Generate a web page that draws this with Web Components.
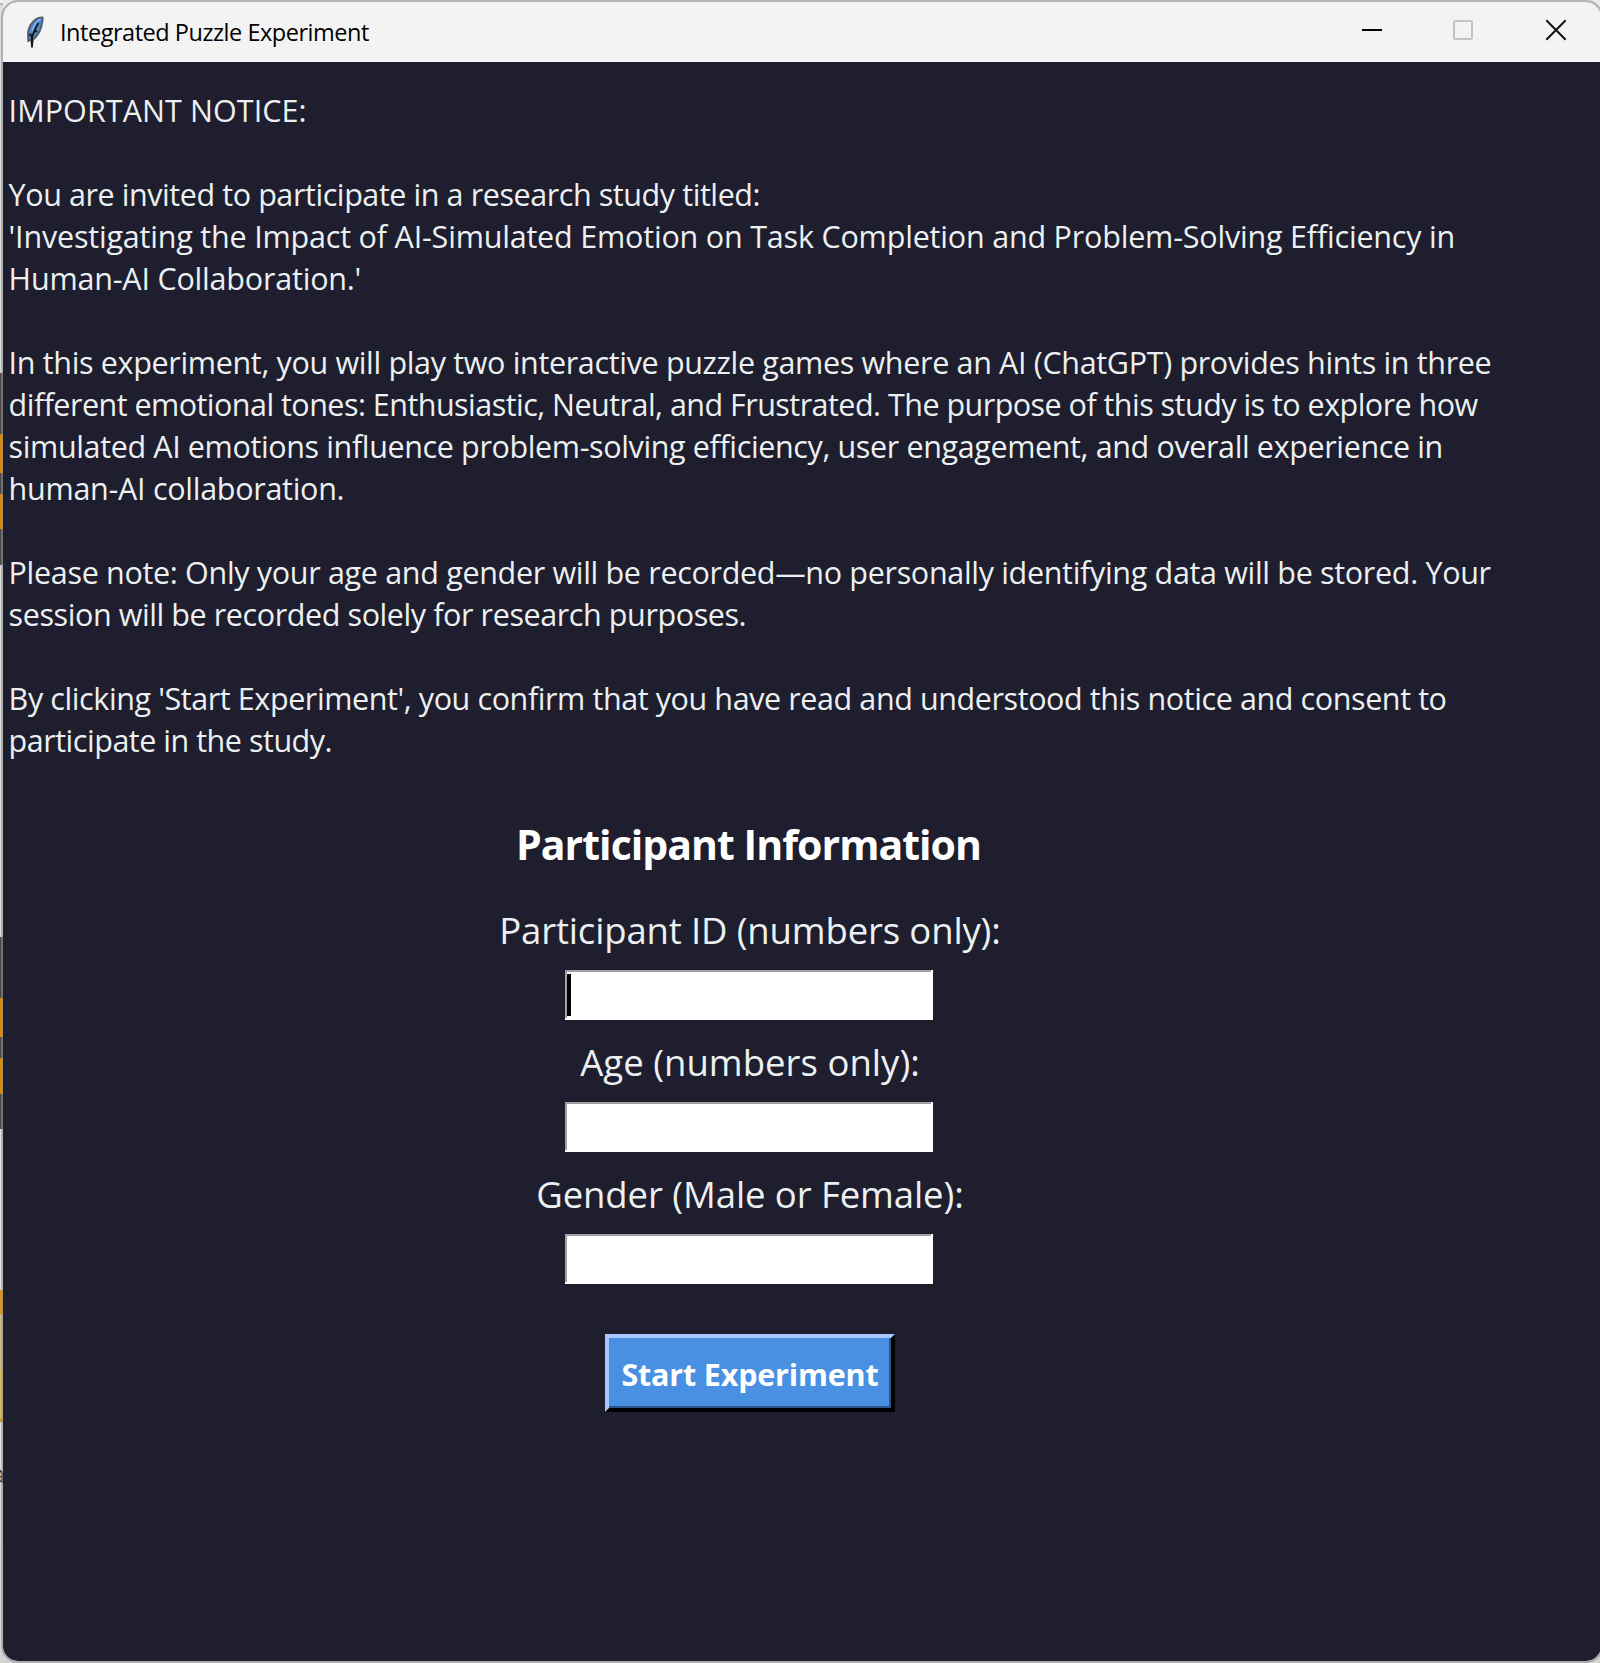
<!DOCTYPE html>
<html lang="en">
<head>
<meta charset="utf-8">
<title>Integrated Puzzle Experiment</title>
<style>
html,body{margin:0;height:100%;overflow:hidden;background:#ebebeb}
body{font-family:"Open Sans","Noto Sans",sans-serif}
</style>
</head>
<body>
<experiment-app></experiment-app>
<script>
const define=(name,html,init)=>customElements.define(name,class extends HTMLElement{
  constructor(){super();this.attachShadow({mode:'open'}).innerHTML=html;}
  connectedCallback(){if(init)init.call(this);}
});
const pen=document.createElement('canvas').getContext('2d');

// One line of text, tracked so that its ink spans the "span" attribute in pixels.
define('text-line','<style>:host{display:block;white-space:pre}</style><slot></slot>',function(){
  const span=+this.getAttribute('span');
  const cs=getComputedStyle(this);
  pen.font=`${cs.fontWeight} ${cs.fontSize} "Open Sans"`;
  const t=this.textContent, m=pen.measureText(t);
  const ink=m.actualBoundingBoxRight+m.actualBoundingBoxLeft;
  const gap=(span-ink)/(t.length-1);
  this.style.letterSpacing=gap.toFixed(4)+'px';
  this.style.marginRight=(-gap).toFixed(4)+'px';
});

define('title-bar',`<style>
:host{display:flex;flex:none;height:60px;background:#f3f3f3;color:#000;align-items:flex-start;font-size:23.5px}
.feather{width:20px;height:34px;margin:12px 0 0 22px;flex:none}
text-line{line-height:36px;margin-left:15px;margin-top:12px}
.controls{margin-left:auto;margin-right:34px;margin-top:17px;display:flex;gap:71px}
.controls svg{width:22px;height:22px;display:block}
.controls svg:first-child{margin-right:-2px}
</style>
<svg class="feather" viewBox="0 0 20 34"><path d="M17.6 3.5C13 3 8.5 6.5 5.5 11 3.5 15 2.6 19 3 22L3.3 27 6 25.5 7 31.5 8 25.5C12 22.5 15 18 16.5 12 17 8.5 18 6 17.6 3.5Z" fill="#4b86d0" stroke="#555b62" stroke-width="1.8"/><path d="M15.5 5C12 7 9 11 7 17" fill="none" stroke="#7db0ec" stroke-width="2"/><path d="M13.5 9C11 12 9 18 7 23V33.5M4.5 20L7 22.5M9.5 16L12 18" fill="none" stroke="#141414" stroke-width="1.9"/></svg>
<text-line span="307">Integrated Puzzle Experiment</text-line>
<div class="controls">
<svg viewBox="0 0 22 22"><path d="M1 11H21" stroke="#000" stroke-width="2"/></svg>
<svg viewBox="0 0 22 22"><rect x="2" y="2" width="18" height="18" rx="1.5" fill="none" stroke="#c3c3c3" stroke-width="2"/></svg>
<svg viewBox="0 0 22 22"><path d="M1.3 1.3L20.7 20.7M20.7 1.3L1.3 20.7" stroke="#111" stroke-width="2"/></svg>
</div>`);

define('consent-notice',`<style>
:host{display:block;padding:27px 0 0 5.6px;font-size:30.5px;line-height:42px;color:#ecf0f1}
.gap{height:42px}
</style>
<text-line span="294">IMPORTANT NOTICE:</text-line><div class="gap"></div>
<text-line span="750">You are invited to participate in a research study titled:</text-line>
<text-line span="1443">'Investigating the Impact of AI-Simulated Emotion on Task Completion and Problem-Solving Efficiency in</text-line>
<text-line span="349">Human-AI Collaboration.'</text-line><div class="gap"></div>
<text-line span="1480">In this experiment, you will play two interactive puzzle games where an AI (ChatGPT) provides hints in three</text-line>
<text-line span="1469">different emotional tones: Enthusiastic, Neutral, and Frustrated. The purpose of this study is to explore how</text-line>
<text-line span="1432">simulated AI emotions influence problem-solving efficiency, user engagement, and overall experience in</text-line>
<text-line span="332">human-AI collaboration.</text-line><div class="gap"></div>
<text-line span="1480">Please note: Only your age and gender will be recorded—no personally identifying data will be stored. Your</text-line>
<text-line span="735">session will be recorded solely for research purposes.</text-line><div class="gap"></div>
<text-line span="1435">By clicking 'Start Experiment', you confirm that you have read and understood this notice and consent to</text-line>
<text-line span="320">participate in the study.</text-line>`);

define('form-field',`<style>
:host{display:flex;flex-direction:column;align-items:center;gap:16px;font-size:36.5px;line-height:48px;color:#ecf0f1}
::slotted(text-line){padding-left:2px}
.entry{box-sizing:border-box;width:368px;height:50px;background:#fff;padding:0 2px 2px 0}
.sunk{box-sizing:border-box;height:48px;border:solid #a0a0a0;border-width:2px 0 0 2px;padding-top:2px}
.caret{display:none;width:4px;height:42px;background:#000}
:host([focused]) .caret{display:block}
</style><slot></slot><div class="entry"><div class="sunk"><div class="caret"></div></div></div>`);

define('raised-button',`<style>
:host{box-sizing:border-box;display:flex;justify-content:center;width:290px;height:78px;background:#4a90e2;
border:4px solid;border-color:#a4c8ff #000 #000 #a4c8ff;box-shadow:inset -2px -2px #2c5688;
padding-top:15px;font-size:30.5px;line-height:42px;font-weight:700;color:#fff}
</style><slot></slot>`);

define('participant-form',`<style>
:host{display:flex;flex-direction:column;align-items:center;width:1492px;padding-top:55px}
.head{font-size:41px;line-height:56px;font-weight:700;color:#fff;margin-bottom:34px}
.fields{display:flex;flex-direction:column;gap:18px;margin-bottom:50px}
raised-button{margin-left:2px}
</style>
<text-line class="head" span="460">Participant Information</text-line>
<div class="fields">
<form-field focused><text-line span="496">Participant ID (numbers only):</text-line></form-field>
<form-field><text-line span="337">Age (numbers only):</text-line></form-field>
<form-field><text-line span="423">Gender (Male or Female):</text-line></form-field>
</div>
<raised-button><text-line span="256">Start Experiment</text-line></raised-button>`);

define('app-window',`<style>
:host{box-sizing:border-box;display:flex;flex-direction:column;flex:none;width:1602px;height:1663px;margin-left:-2px;
border:2px solid rgba(145,145,145,.6);border-radius:17px;overflow:hidden;background:#1e1e2e padding-box}
</style><slot></slot>`);

// Sliver of the windows lying behind, visible along the left edge.
define('back-strip',`<style>
:host{display:flex;flex-direction:column;flex:none;width:3px;height:1663px;overflow:hidden}
i{display:block;flex:none}
span{height:18px;flex:none;font:23px/12px "Open Sans";color:#222;margin-left:-8px}
</style>`,function(){
  const add=(h,c)=>{const i=document.createElement('i');i.style.cssText=`height:${h}px;background:${c}`;this.shadowRoot.append(i);};
  [[3,'#eee'],[2,'#bbb'],[368,'#ddd'],[61,'#444'],[39,'#dc8a05'],[21,'#444'],[35,'#dc8a05'],[36,'#444'],[372,'#ddd'],
   [61,'#444'],[39,'#dc8a05'],[21,'#444'],[36,'#dc8a05'],[35,'#444'],[161,'#e2e2e2'],[24,'#d99b17'],[56,'#d1c08c'],[49,'#e0bd60'],[3,'#c79631'],[46,'#e4e4e4']].forEach(a=>add(...a));
  const s=document.createElement('span');s.textContent='a';this.shadowRoot.append(s);
});

define('experiment-app',`<style>
:host{display:flex;height:1663px;width:1600px;overflow:hidden;background:linear-gradient(#ebebeb 0 60%,#d4d4d4)}
</style>
<back-strip></back-strip>
<app-window><title-bar></title-bar><consent-notice></consent-notice><participant-form></participant-form></app-window>`);
</script>
</body>
</html>
